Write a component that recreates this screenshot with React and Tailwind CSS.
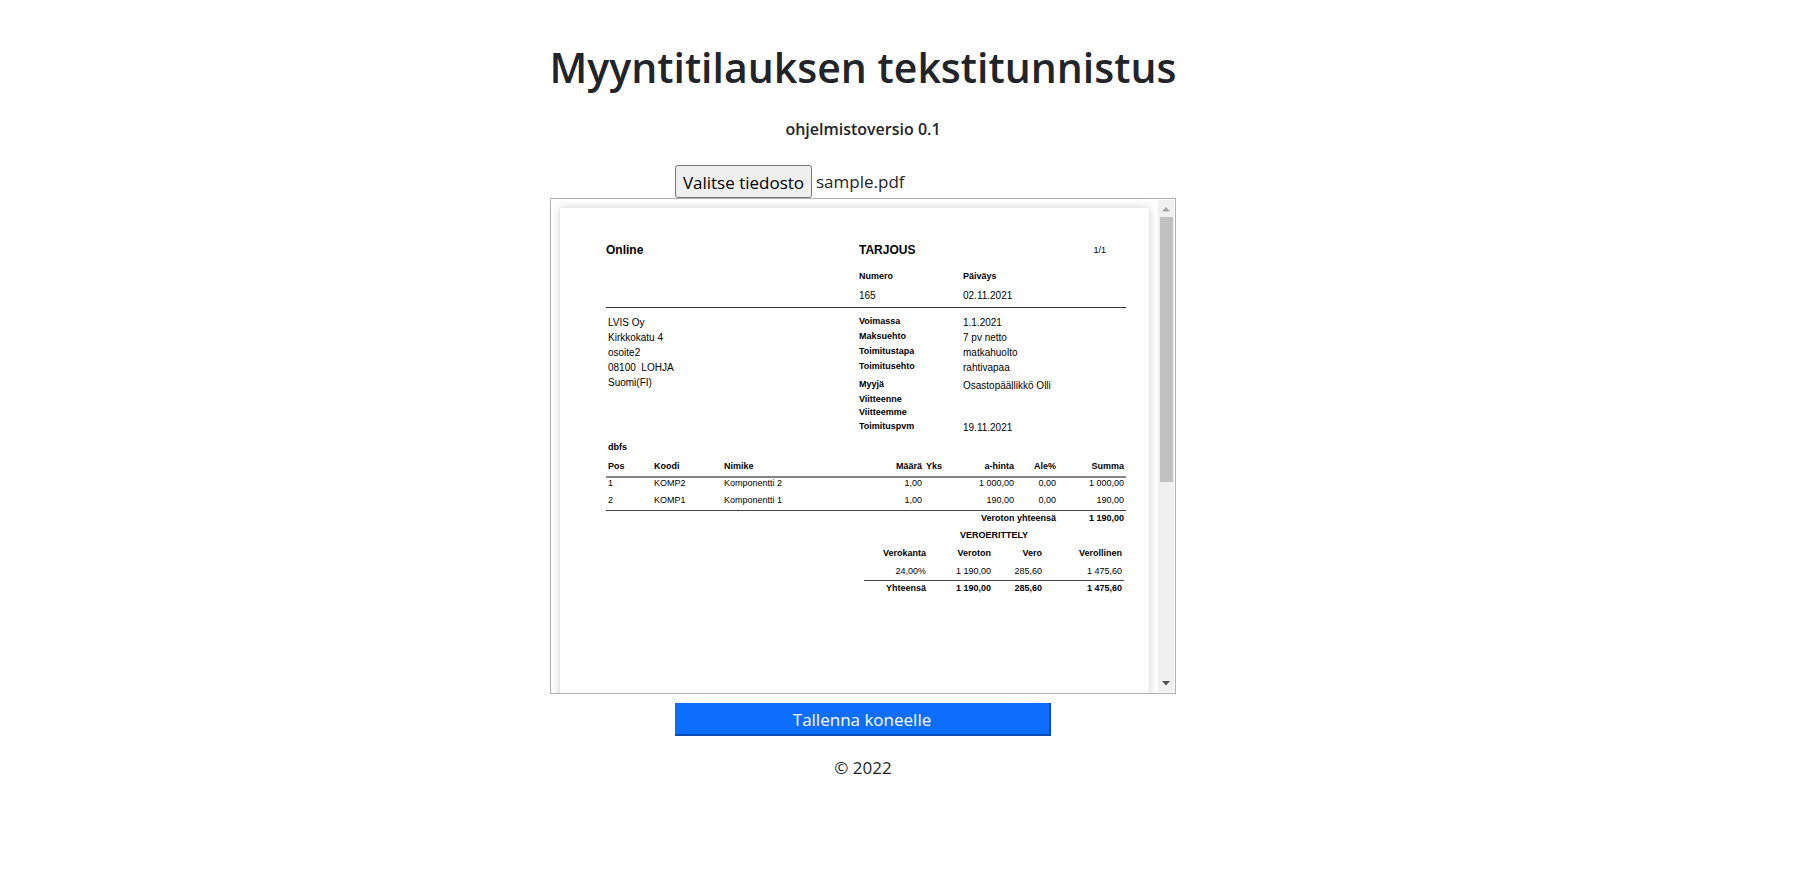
import { useRef, useState } from "react";

const address = ["LVIS Oy", "Kirkkokatu 4", "osoite2", "08100  LOHJA", "Suomi(FI)"];

const terms = [
  ["Voimassa", "1.1.2021", "h-[15px]"],
  ["Maksuehto", "7 pv netto", "h-[15px]"],
  ["Toimitustapa", "matkahuolto", "h-[15px]"],
  ["Toimitusehto", "rahtivapaa", "h-[18px]"],
  ["Myyjä", "Osastopäällikkö Olli", "h-[15px]"],
  ["Viitteenne", "", "h-[13px]"],
  ["Viitteemme", "", "h-[14px]"],
  ["Toimituspvm", "19.11.2021", "h-[16px]"],
];

const items = [
  ["1", "KOMP2", "Komponentti 2", "1,00", "", "1 000,00", "0,00", "1 000,00"],
  ["2", "KOMP1", "Komponentti 1", "1,00", "", "190,00", "0,00", "190,00"],
];

const itemColumns = [
  ["Pos", "w-[46px] text-left"],
  ["Koodi", "w-[70px] text-left"],
  ["Nimike", "w-[137px] text-left"],
  ["Määrä", "w-[65px] text-right"],
  ["Yks", "w-[38px] text-left"],
  ["a-hinta", "w-[54px] text-right"],
  ["Ale%", "w-[42px] text-right"],
  ["Summa", "text-right"],
];

const taxColumns = [
  ["Verokanta", "w-[64px]"],
  ["Veroton", "w-[65px]"],
  ["Vero", "w-[51px]"],
  ["Verollinen", ""],
];

function Quote() {
  return (
    <article className="h-[832px] bg-white pt-9 pr-[23px] pl-[46px] font-['Liberation_Sans',Arial,sans-serif] text-[10px] leading-3 text-black shadow-[0_0_9px_rgba(0,0,0,0.2)]">
      <header className="grid grid-cols-[253px_104px_1fr] border-b border-[#333] pb-[5px]">
        <h2 className="h-[26px] text-[12px] font-bold">Online</h2>
        <h2 className="text-[12px] font-bold">TARJOUS</h2>
        <span className="pr-5 text-right text-[9px]">1/1</span>
        <span className="col-start-2 h-5 text-[9px] font-bold">Numero</span>
        <span className="text-[9px] font-bold">Päiväys</span>
        <span className="col-start-2">165</span>
        <span>02.11.2021</span>
      </header>
      <div className="grid grid-cols-[253px_1fr] pt-[7px]">
        <address className="pl-[2px] leading-[15px] whitespace-pre not-italic">
          {address.map((line) => (
            <div key={line}>{line}</div>
          ))}
        </address>
        <dl>
          {terms.map(([label, value, height]) => (
            <div key={label} className={"grid grid-cols-[104px_1fr] " + height}>
              <dt className="text-[9px] leading-[13px] font-bold">{label}</dt>
              <dd className="leading-[15px]">{value}</dd>
            </div>
          ))}
        </dl>
      </div>
      <h3 className="mt-[5px] pl-[2px] text-[9px] font-bold">dbfs</h3>
      <table className="mt-1 w-full table-fixed border-separate border-spacing-0 text-[9px] leading-[11px]">
        <thead>
          <tr>
            {itemColumns.map(([name, style]) => (
              <th key={name} className={"h-[21px] border-b-2 border-[#868686] px-[2px] " + style}>
                {name}
              </th>
            ))}
          </tr>
        </thead>
        <tbody>
          {items.map((row, r) => (
            <tr key={row[0]}>
              {row.map((cell, i) => (
                <td
                  key={i}
                  className={
                    "px-[2px] align-top " +
                    (i > 2 ? "text-right " : "text-left ") +
                    (r === 1 ? "h-4 border-b border-[#444]" : "h-[17px]")
                  }
                >
                  {cell}
                </td>
              ))}
            </tr>
          ))}
        </tbody>
        <tfoot>
          <tr className="font-bold">
            <td colSpan={7} className="h-[14px] px-[2px] text-right">Veroton yhteensä</td>
            <td className="px-[2px] text-right">1 190,00</td>
          </tr>
        </tfoot>
      </table>
      <table className="mt-1 mr-[2px] ml-auto w-[260px] table-fixed border-separate border-spacing-0 text-right text-[9px] leading-[11px]">
        <caption className="h-[14px] pt-px text-center font-bold">VEROERITTELY</caption>
        <thead>
          <tr>
            {taxColumns.map(([name, style]) => (
              <th key={name} className={"h-5 px-[2px] " + style}>{name}</th>
            ))}
          </tr>
        </thead>
        <tbody>
          <tr>
            {["24,00%", "1 190,00", "285,60", "1 475,60"].map((cell) => (
              <td key={cell} className="h-[18px] border-b border-[#444] px-[2px]">{cell}</td>
            ))}
          </tr>
        </tbody>
        <tfoot>
          <tr className="font-bold">
            {["Yhteensä", "1 190,00", "285,60", "1 475,60"].map((cell) => (
              <td key={cell} className="h-[14px] px-[2px]">{cell}</td>
            ))}
          </tr>
        </tfoot>
      </table>
    </article>
  );
}

function ScrollTrack() {
  return (
    <div className="my-px mr-px flex w-4 shrink-0 flex-col items-center bg-[#f0f0f0]" aria-hidden="true">
      <svg className="h-[17px] w-4 shrink-0" viewBox="0 0 16 17" fill="#a3a3a3">
        <path d="M4 11.500 8 7l4 4.500z" />
      </svg>
      <div className="h-[265px] w-[13px] bg-[#c1c1c1]" />
      <svg className="mt-auto h-[17px] w-4 shrink-0" viewBox="0 0 16 17" fill="#505050">
        <path d="M4 6h8l-4 4.500z" />
      </svg>
    </div>
  );
}

export default function App() {
  const picker = useRef(null);
  const [fileName, setFileName] = useState("sample.pdf");

  return (
    <main className="flex flex-col items-center pt-10 pr-[69px] font-['Open_Sans',sans-serif] text-[17px] leading-[27px] text-[#212529]">
      <h1 className="text-[41px] leading-[54px] font-semibold">Myyntitilauksen tekstitunnistus</h1>
      <h2 className="mt-[22px] text-[16px] leading-[27px] font-semibold">ohjelmistoversio 0.1</h2>
      <div className="mt-[22px] flex h-[33px] w-full max-w-[376px] items-center gap-1">
        <button
          type="button"
          onClick={() => picker.current.click()}
          className="h-[33px] w-[137px] shrink-0 rounded-[3px] border border-[#767676] bg-[#efefef] pt-px text-center whitespace-nowrap text-black"
        >
          Valitse tiedosto
        </button>
        <input
          ref={picker}
          type="file"
          aria-label="Valitse tiedosto"
          className="hidden"
          onChange={(e) => setFileName(e.target.files[0]?.name ?? fileName)}
        />
        <span>{fileName}</span>
      </div>
      <section className="flex h-[496px] w-full max-w-[626px] overflow-hidden border border-[#b0b0b0]" aria-label="Esikatselu">
        <div className="min-w-0 flex-1 overflow-hidden pt-[9px] pr-[9px] pl-[9px]">
          <Quote />
        </div>
        <ScrollTrack />
      </section>
      <button
        type="button"
        className="mt-[9px] h-[33px] w-full max-w-[376px] border-t-0 border-r-2 border-b-2 border-l-0 border-[#0a4ab3] bg-[#0d6efd] pt-[2px] text-white"
      >
        Tallenna koneelle
      </button>
      <footer className="mt-[18px]">© 2022</footer>
    </main>
  );
}
